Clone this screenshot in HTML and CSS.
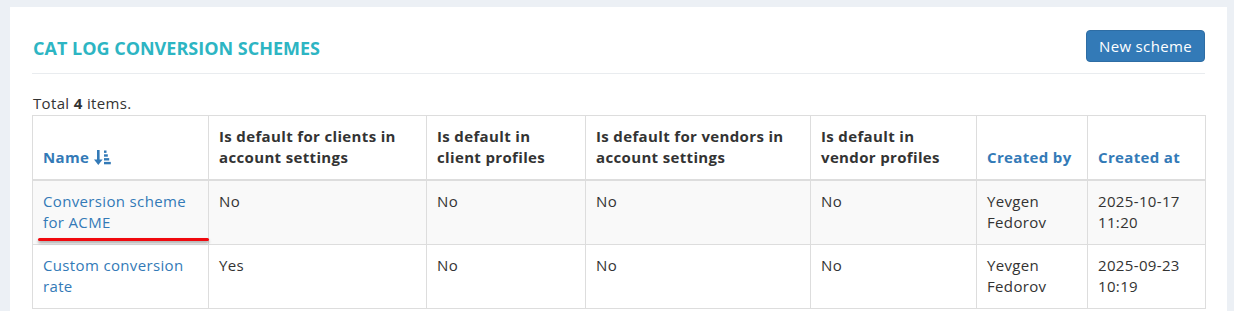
FILE: index.html
```html
<!DOCTYPE html>
<html lang="en">
<head>
<meta charset="utf-8">
<title>Cat log conversion schemes</title>
<link rel="stylesheet" href="styles.css">
</head>
<body>
<div class="panel">
  <div class="panel-head">
    <h1 class="title">CAT LOG CONVERSION SCHEMES</h1>
    <a class="btn" href="#">New scheme</a>
  </div>
  <div class="summary">Total <b>4</b> items.</div>
  <table class="grid">
    <colgroup>
      <col class="c1"><col class="c2"><col class="c3"><col class="c4"><col class="c5"><col class="c6"><col class="c7">
    </colgroup>
    <thead>
      <tr>
        <th><a href="#" class="sort">Name <svg class="sort-icon" viewBox="0 0 17 15" width="17" height="15"><rect x="3" y="0" width="2.6" height="10.5" fill="currentColor"/><path d="M0 9.5 H8.6 L4.3 15 Z" fill="currentColor"/><rect x="10" y="0.5" width="2.5" height="2.4" fill="currentColor"/><rect x="10" y="4.3" width="3.8" height="2.4" fill="currentColor"/><rect x="10" y="8.1" width="5.2" height="2.4" fill="currentColor"/><rect x="10" y="11.9" width="6.8" height="2.4" fill="currentColor"/></svg></a></th>
        <th>Is default for clients in account settings</th>
        <th>Is default in client profiles</th>
        <th>Is default for vendors in account settings</th>
        <th>Is default in vendor profiles</th>
        <th><a href="#" class="sort">Created by</a></th>
        <th><a href="#" class="sort">Created at</a></th>
      </tr>
    </thead>
    <tbody>
      <tr class="odd">
        <td class="marked"><a href="#">Conversion scheme for ACME</a><span class="redline"></span></td>
        <td>No</td><td>No</td><td>No</td><td>No</td>
        <td>Yevgen Fedorov</td><td>2025-10-17 11:20</td>
      </tr>
      <tr>
        <td><a href="#">Custom conversion rate</a></td>
        <td>Yes</td><td>No</td><td>No</td><td>No</td>
        <td>Yevgen Fedorov</td><td>2025-09-23 10:19</td>
      </tr>
    </tbody>
  </table>
</div>
</body>
</html>
```

FILE: styles.css
```css
html, body {
  margin: 0;
  background: #ecf0f5;
}
body {
  padding: 7px 7px 0 10px;
  font-family: "Open Sans", "Liberation Sans", sans-serif;
  font-size: 15px;
  line-height: 1.42857;
  color: #333;
  letter-spacing: 0.35px;
}
.panel {
  background: #fff;
  padding: 23px 22px 40px 22px;
}
.panel-head {
  display: flex;
  justify-content: space-between;
  align-items: center;
  padding-bottom: 11px;
  border-bottom: 1px solid #e9ecef;
}
.title {
  margin: 3px 0 0 1px;
  font-size: 18px;
  font-weight: 700;
  color: #2db5c3;
  line-height: 26px;
  letter-spacing: 0;
}
.btn {
  display: inline-block;
  background: #337ab7;
  border: 1px solid #2e6da4;
  border-radius: 4px;
  color: #fff;
  text-decoration: none;
  font-size: 15px;
  line-height: 20px;
  padding: 5px 12px 5px 12px;
}
.summary {
  margin-top: 18px;
  padding-left: 1px;
  line-height: 22px;
}
.summary b { font-weight: 700; }
.grid {
  width: 1173px;
  table-layout: fixed;
  border-collapse: collapse;
  margin-top: 1px;
}
.c1 { width: 176px; }
.c2 { width: 218px; }
.c3 { width: 159px; }
.c4 { width: 225px; }
.c5 { width: 166px; }
.c6 { width: 111px; }
.c7 { width: 118px; }
.grid th, .grid td {
  border: 1px solid #ddd;
  padding: 10px 10px;
  text-align: left;
}
.grid th {
  vertical-align: bottom;
  font-weight: 700;
  border-bottom: 2px solid #ddd;
}
.grid td {
  vertical-align: top;
}
.grid tr.odd td { background: #f9f9f9; }
.grid a {
  color: #337ab7;
  text-decoration: none;
}
.grid th a.sort { color: #337ab7; }
.sort-icon {
  vertical-align: -2px;
  margin-left: 0;
}
.marked { position: relative; }
.redline {
  position: absolute;
  left: 5px;
  right: -1px;
  bottom: 3px;
  height: 3px;
  border-radius: 2px;
  background: #f0090e;
  box-shadow: 0 2px 3px rgba(0,0,0,0.35);
}
```
